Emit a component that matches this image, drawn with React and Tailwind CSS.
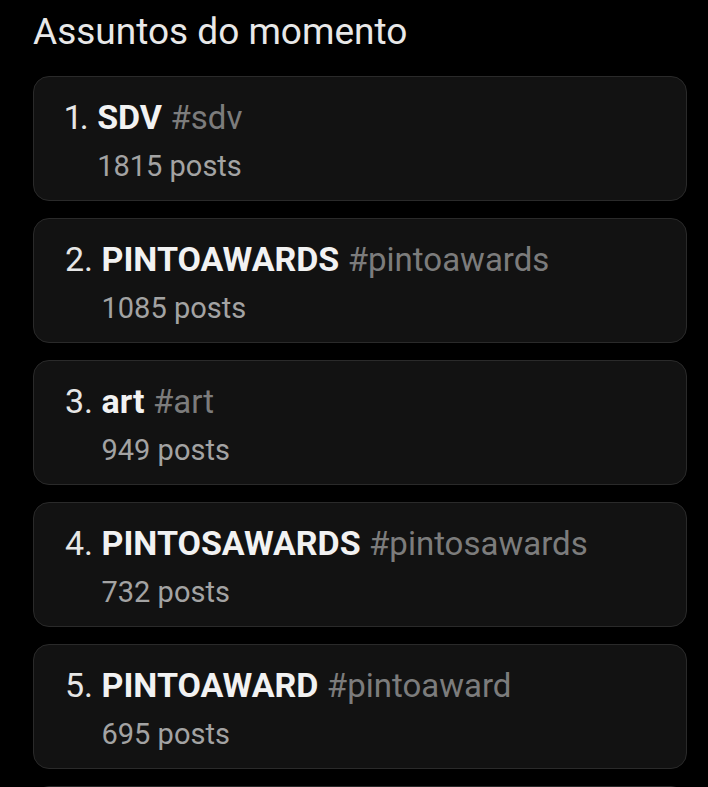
import React from "react";

const items = [
  { n: 1, title: "SDV", tag: "#sdv", posts: "1815 posts" },
  { n: 2, title: "PINTOAWARDS", tag: "#pintoawards", posts: "1085 posts" },
  { n: 3, title: "art", tag: "#art", posts: "949 posts" },
  { n: 4, title: "PINTOSAWARDS", tag: "#pintosawards", posts: "732 posts" },
  { n: 5, title: "PINTOAWARD", tag: "#pintoaward", posts: "695 posts" },
  { n: 6, title: "", tag: "", posts: "" },
];

export default function App() {
  return (
    <div className="w-[708px] h-[787px] overflow-hidden bg-black font-['Roboto',sans-serif]">
      <div className="pl-[33px] pr-[21px] pt-[9px]">
        <h1 className="text-[37px] leading-[46px] text-[#e8e8e8] font-normal">Assuntos do momento</h1>
        <div className="mt-[21px] flex flex-col gap-[17px]">
          {items.map((it) => (
            <div
              key={it.n}
              className="h-[125px] shrink-0 rounded-[16px] border border-[#2a2a2a] bg-[#121212] pl-[31px] pt-[18px]"
            >
              {it.title && (
                <div className="flex">
                  <span className="text-[34px] leading-[44px] text-[#e6e6e6] whitespace-pre proportional-nums">{it.n}. </span>
                  <div className="flex flex-col">
                    <div className="text-[34px] leading-[44px] whitespace-nowrap">
                      <span className="font-bold text-[#f2f2f2]">{it.title}</span>{" "}
                      <span className="text-[33px] text-[#7c7c7c]">{it.tag}</span>
                    </div>
                    <div className="mt-[8px] text-[29px] leading-[36px] text-[#a3a3a3]">{it.posts}</div>
                  </div>
                </div>
              )}
            </div>
          ))}
        </div>
      </div>
    </div>
  );
}
